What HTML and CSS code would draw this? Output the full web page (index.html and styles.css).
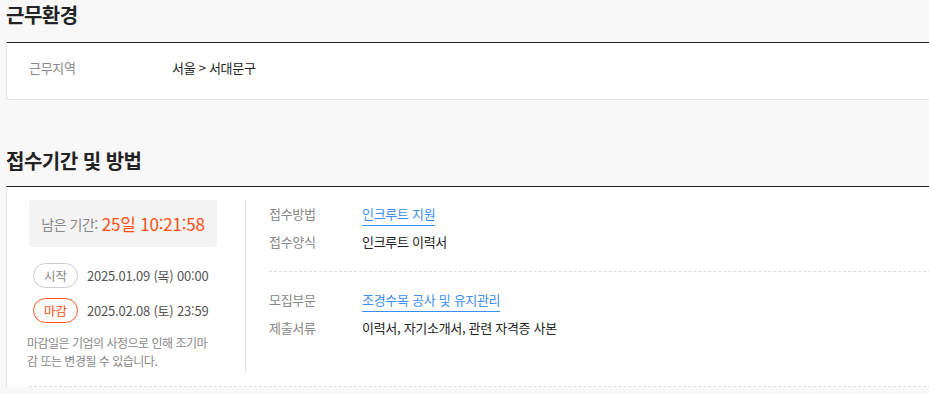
FILE: index.html
```html
<!DOCTYPE html>
<html lang="ko">
<head>
    <meta charset="UTF-8">
    <meta name="viewport" content="width=device-width, initial-scale=1.0">
    <title>근무환경 · 접수기간 및 방법</title>
    <link rel="stylesheet" href="styles.css">
</head>
<body>
    <div class="wrap">
        <section class="block">
            <h2 class="block-title">근무환경</h2>
            <div class="env-box">
                <div class="env-row">
                    <span class="env-label">근무지역</span>
                    <span class="env-value">서울 &gt; 서대문구</span>
                </div>
            </div>
        </section>

        <section class="block block-apply">
            <h2 class="block-title">접수기간 및 방법</h2>
            <div class="apply-box">
                <div class="apply-inner">
                    <div class="apply-left">
                        <div class="remain">
                            <span class="remain-label">남은 기간:</span>
                            <span class="remain-time">25일 10:21:58</span>
                        </div>
                        <div class="date-row">
                            <span class="badge">시작</span>
                            <span class="date">2025.01.09 (목) 00:00</span>
                        </div>
                        <div class="date-row">
                            <span class="badge badge-end">마감</span>
                            <span class="date">2025.02.08 (토) 23:59</span>
                        </div>
                        <p class="notice">마감일은 기업의 사정으로 인해 조기마감 또는 변경될 수 있습니다.</p>
                    </div>
                    <div class="apply-right">
                        <dl class="info-group">
                            <div class="info-row">
                                <dt>접수방법</dt>
                                <dd><a href="#" class="link">인크루트 지원</a></dd>
                            </div>
                            <div class="info-row">
                                <dt>접수양식</dt>
                                <dd>인크루트 이력서</dd>
                            </div>
                        </dl>
                        <dl class="info-group last">
                            <div class="info-row">
                                <dt>모집부문</dt>
                                <dd><a href="#" class="link">조경수목 공사 및 유지관리</a></dd>
                            </div>
                            <div class="info-row">
                                <dt>제출서류</dt>
                                <dd>이력서, 자기소개서, 관련 자격증 사본</dd>
                            </div>
                        </dl>
                    </div>
                </div>
            </div>
        </section>
    </div>
</body>
</html>
```

FILE: styles.css
```css
body {
    margin: 0;
    padding: 0;
    background-color: #f8f8f8;
    color: #222;
    font-family: "Noto Sans CJK KR", "Noto Sans", sans-serif;
    overflow: hidden;
}
.wrap {
    width: 1100px;
    padding-left: 6px;
}
.block-title {
    margin: 0;
    font-size: 20px;
    font-weight: 700;
    letter-spacing: -0.5px;
    line-height: 30px;
    height: 42px;
    color: #222;
}
.block-apply {
    margin-top: 46px;
}
.block-apply .block-title {
    height: 40px;
}
.env-box {
    background: #fff;
    border-top: 1px solid #222;
    border-left: 1px solid #dfe1e5;
    border-bottom: 1px solid #dfe1e5;
    border-radius: 0 0 0 3px;
    height: 56px;
    display: flex;
    align-items: center;
}
.env-row {
    display: flex;
    padding-left: 22px;
    padding-bottom: 8px;
    font-size: 13px;
    letter-spacing: -0.3px;
}
.env-label {
    width: 143px;
    color: #888;
}
.env-value {
    color: #222;
}
.apply-box {
    background: #fff;
    border-top: 1px solid #222;
    border-left: 1px solid #dfe1e5;
    padding: 13px 0 0 22px;
}
.apply-inner {
    display: flex;
    padding-bottom: 14px;
    border-bottom: 1px dashed #ddd;
}
.apply-left {
    width: 216px;
    padding-bottom: 2px;
    border-right: 1px solid #e3e3e3;
}
.remain {
    width: 188px;
    height: 47px;
    background: #f4f4f4;
    border-radius: 3px;
    display: flex;
    align-items: center;
    justify-content: center;
    gap: 4px;
}
.remain-label {
    font-size: 14px;
    color: #888;
    letter-spacing: -0.5px;
}
.remain-time {
    font-size: 17px;
    font-weight: 400;
    color: #ff4f12;
    letter-spacing: -0.2px;
}
.date-row {
    display: flex;
    align-items: center;
    margin-left: 4px;
    height: 25px;
    margin-top: 10px;
}
.date-row + .date-row {
    margin-top: 10px;
}
.remain + .date-row {
    margin-top: 16px;
}
.badge {
    width: 43px;
    height: 23px;
    border: 1px solid #ccc;
    border-radius: 13px;
    font-size: 12.5px;
    color: #888;
    display: flex;
    align-items: center;
    justify-content: center;
    margin-right: 9px;
}
.badge-end {
    border-color: #ff5a1f;
    color: #ff4f12;
}
.date {
    font-size: 13px;
    color: #555;
    letter-spacing: -0.2px;
}
.notice {
    margin: 11px 0 0 -2px;
    width: 186px;
    font-size: 12px;
    line-height: 18px;
    color: #888;
    letter-spacing: -0.5px;
    word-break: break-all;
}
.apply-right {
    flex: 1;
    padding-left: 23px;
}
.info-group {
    margin: 0;
    padding-bottom: 15px;
    border-bottom: 1px dashed #ddd;
}
.info-group.last {
    border-bottom: none;
    padding-top: 14px;
}
.info-row {
    display: flex;
    line-height: 28px;
    font-size: 13px;
    letter-spacing: -0.3px;
}
.info-row dt {
    width: 93px;
    color: #888;
}
.info-row dd {
    margin: 0;
    color: #222;
}
.link {
    color: #3b8ff0;
    text-decoration: none;
    border-bottom: 1px solid #3b8ff0;
    padding-bottom: 2px;
}
```
